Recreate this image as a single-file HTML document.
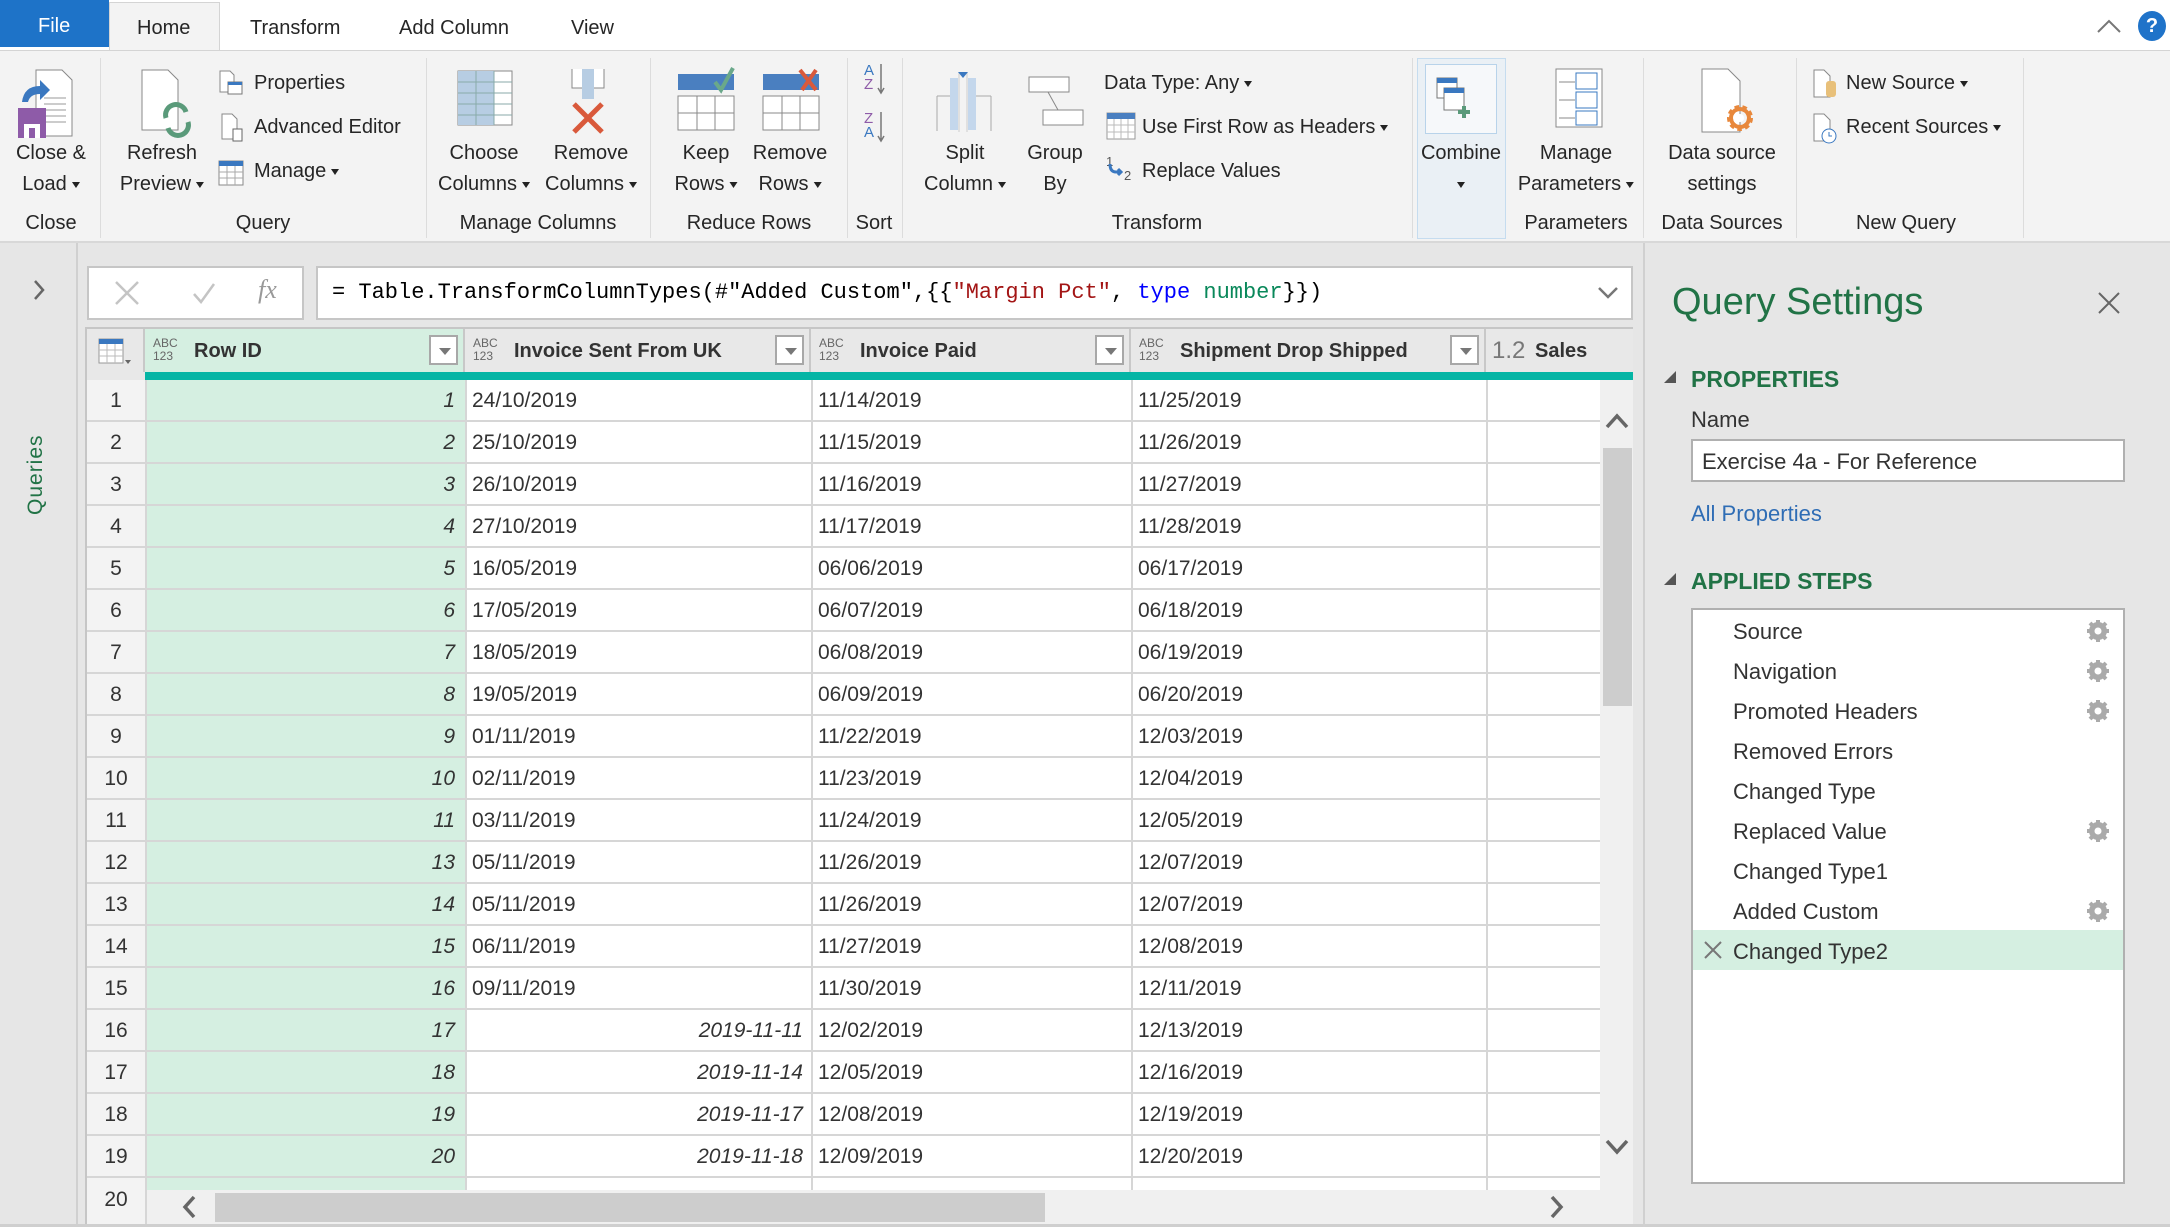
<!DOCTYPE html>
<html><head><meta charset="utf-8">
<style>
*{margin:0;padding:0;box-sizing:border-box}
body{width:2170px;height:1227px;overflow:hidden;background:#e6e6e6;font-family:"Liberation Sans",sans-serif;color:#262626;position:relative}
.a{position:absolute;white-space:nowrap}
.t{font-size:20px;color:#262626}
.c{transform:translateX(-50%);text-align:center;line-height:31px}
.sep{position:absolute;top:58px;width:1px;height:180px;background:#dcdcdc}
.tri{display:inline-block;width:0;height:0;border-left:4px solid transparent;border-right:4px solid transparent;border-top:6px solid #222;vertical-align:middle;margin-left:5px}
.row{position:absolute;left:87px;width:1513px;height:42px;border-bottom:2px solid #d6d6d6}
.cell{position:absolute;top:1px;height:40px;line-height:40px;font-size:21px;color:#333}
.hd{position:absolute;top:329px;height:43px;background:#e8e8e8;border-right:2px solid #c8c8c8}
.ty{position:absolute;top:8px;font-size:12px;line-height:13px;color:#666}
.hn{position:absolute;top:11px;font-size:20px;font-weight:bold;color:#333}
.dd{position:absolute;top:6px;width:29px;height:30px;border:2px solid #a8a8a8;background:#fff}
.dd:after{content:"";position:absolute;left:8px;top:11px;border-left:6px solid transparent;border-right:6px solid transparent;border-top:7px solid #777}
.step{position:absolute;left:1733px;font-size:22px;color:#333}
.gear{position:absolute;left:2086px;width:24px;height:24px}
</style></head><body>
<!-- tab bar -->
<div class="a" style="left:0;top:0;width:2170px;height:50px;background:#fff"></div>
<div class="a" style="left:0;top:0;width:109px;height:47px;background:#1e73c8"></div>
<div class="a" style="left:38px;top:15px;font-size:20px;color:#fff">File</div>
<div class="a" style="left:109px;top:2px;width:111px;height:49px;background:#f3f3f3;border:1px solid #d4d4d4;border-bottom:none"></div>
<div class="a t" style="left:137px;top:17px">Home</div>
<div class="a t" style="left:250px;top:17px">Transform</div>
<div class="a t" style="left:399px;top:17px">Add Column</div>
<div class="a t" style="left:571px;top:17px">View</div>
<svg class="a" style="left:2096px;top:18px" width="26" height="16"><path d="M2 14 L13 3 L24 14" fill="none" stroke="#777" stroke-width="2"/></svg>
<div class="a" style="left:2138px;top:11px;width:28px;height:30px;border-radius:50%;background:#1f73c9;color:#fff;font-size:20px;font-weight:bold;text-align:center;line-height:30px">?</div>
<!-- ribbon -->
<div class="a" style="left:0;top:50px;width:2170px;height:193px;background:#f3f3f3;border-top:1px solid #d4d4d4;border-bottom:2px solid #d8d8d8"></div>
<div class="sep" style="left:100px"></div><div class="sep" style="left:426px"></div><div class="sep" style="left:650px"></div><div class="sep" style="left:847px"></div><div class="sep" style="left:902px"></div><div class="sep" style="left:1412px"></div><div class="sep" style="left:1643px"></div><div class="sep" style="left:1796px"></div><div class="sep" style="left:2023px"></div>
<div class="a" style="left:1417px;top:58px;width:89px;height:181px;background:#eaf0f5;border:1px solid #c5dcef"></div>
<div class="a" style="left:1425px;top:64px;width:72px;height:70px;background:#f6f8fa;border:1px solid #b8d3ea"></div>
<!-- icons -->
<svg class="a" style="left:14px;top:68px" width="62" height="84"><path d="M22 2 H48 L58 12 V68 H22 Z" fill="#fff" stroke="#888"/><path d="M30 30H52M30 36H52M30 42H52M30 48H52M30 54H52" stroke="#999"/><path d="M8 34 Q10 18 26 18 L26 12 L36 22 L26 32 L26 26 Q16 26 14 34 Z" fill="#3a78c0"/><rect x="4" y="40" width="28" height="30" fill="#8e5ba8"/><rect x="10" y="56" width="16" height="14" fill="#fff"/><rect x="15" y="60" width="6" height="10" fill="#8e5ba8"/></svg>
<svg class="a" style="left:138px;top:68px" width="60" height="70"><path d="M4 2 H30 L40 12 V62 H4 Z" fill="#fff" stroke="#888"/><path d="M28 50 A10 10 0 0 1 48 44" fill="none" stroke="#5a9a7a" stroke-width="5"/><path d="M50 54 A10 10 0 0 1 30 60" fill="none" stroke="#5a9a7a" stroke-width="5"/></svg>
<svg class="a" style="left:218px;top:70px" width="26" height="26"><path d="M2 1H12L16 5V22H2Z" fill="#fff" stroke="#888"/><rect x="10" y="12" width="14" height="12" fill="#fff" stroke="#777"/><rect x="10" y="12" width="14" height="3" fill="#3a78c0"/></svg>
<svg class="a" style="left:220px;top:113px" width="26" height="30"><path d="M2 1H12L17 6V26H2Z" fill="#fff" stroke="#888"/><rect x="13" y="16" width="9" height="12" fill="#fff" stroke="#666"/></svg>
<svg class="a" style="left:218px;top:160px" width="26" height="26"><rect x="1" y="1" width="24" height="24" fill="#fff" stroke="#888"/><rect x="1" y="1" width="24" height="5" fill="#3a78c0"/><path d="M1 12H25M1 18H25M9 6V25M17 6V25" stroke="#aaa"/></svg>
<svg class="a" style="left:457px;top:70px" width="56" height="58"><rect x="1" y="1" width="54" height="54" fill="#fff" stroke="#888"/><rect x="1" y="1" width="36" height="54" fill="#b7cde3"/><path d="M1 12H55M1 23H55M1 34H55M1 45H55M19 1V55M37 1V55" stroke="#8aa"/></svg>
<svg class="a" style="left:566px;top:68px" width="50" height="66"><path d="M6 1V20H38V1" fill="#fff" stroke="#888"/><rect x="16" y="1" width="12" height="30" fill="#b7cde3"/><path d="M8 36 L36 64 M36 36 L8 64" stroke="#d9593b" stroke-width="5"/></svg>
<svg class="a" style="left:677px;top:66px" width="58" height="66"><rect x="1" y="8" width="56" height="16" fill="#4a7fc0"/><path d="M38 16 L44 24 L56 2" fill="none" stroke="#6aa88a" stroke-width="4"/><rect x="1" y="30" width="56" height="34" fill="#fff" stroke="#888"/><path d="M1 47H57M20 30V64M38 30V64" stroke="#888"/></svg>
<svg class="a" style="left:762px;top:66px" width="58" height="66"><rect x="1" y="8" width="56" height="16" fill="#4a7fc0"/><path d="M38 4 L54 24 M54 4 L40 24" stroke="#d9593b" stroke-width="4"/><rect x="1" y="30" width="56" height="34" fill="#fff" stroke="#888"/><path d="M1 47H57M20 30V64M38 30V64" stroke="#888"/></svg>
<div class="a" style="left:864px;top:64px;font-size:15px;line-height:14px;color:#3a78c0">A<br><span style="color:#8e5ba8">Z</span></div>
<div class="a" style="left:864px;top:112px;font-size:15px;line-height:14px;color:#8e5ba8">Z<br><span style="color:#3a78c0">A</span></div>
<svg class="a" style="left:877px;top:64px" width="8" height="80"><path d="M4 0V28M1 24L4 29L7 24M4 48V76M1 72L4 77L7 72" fill="none" stroke="#777" stroke-width="1.5"/></svg>
<svg class="a" style="left:936px;top:66px" width="56" height="66"><path d="M1 30H20M36 30H55M1 30V65M55 30V65" fill="none" stroke="#aaa"/><rect x="14" y="12" width="8" height="52" fill="#c4d7ec"/><rect x="32" y="12" width="8" height="52" fill="#c4d7ec"/><path d="M23 6V66M31 6V66" stroke="#ccc"/><path d="M22 6H32L27 12Z" fill="#3a78c0"/></svg>
<svg class="a" style="left:1028px;top:76px" width="56" height="50"><rect x="1" y="1" width="40" height="15" fill="#fff" stroke="#888"/><rect x="15" y="34" width="40" height="15" fill="#fff" stroke="#888"/><path d="M20 16 L30 34" stroke="#888"/></svg>
<svg class="a" style="left:1106px;top:112px" width="30" height="28"><rect x="1" y="1" width="28" height="26" fill="#fff" stroke="#999"/><rect x="1" y="1" width="28" height="6" fill="#4a7fc0"/><path d="M1 13H29M1 20H29M8 7V27M15 7V27M22 7V27" stroke="#bbb"/></svg>
<div class="a" style="left:1106px;top:154px;font-size:13px;color:#555">1</div>
<svg class="a" style="left:1108px;top:162px" width="16" height="16"><path d="M2 2 Q2 10 8 10 H13 M10 7 L13 10 L10 13" fill="none" stroke="#3a78c0" stroke-width="3"/></svg>
<div class="a" style="left:1124px;top:168px;font-size:13px;color:#555">2</div>
<svg class="a" style="left:1436px;top:76px" width="36" height="42"><rect x="1" y="2" width="20" height="20" fill="#fff" stroke="#777"/><rect x="1" y="2" width="20" height="5" fill="#3a78c0"/><rect x="8" y="12" width="20" height="22" fill="#fff" stroke="#777"/><rect x="8" y="12" width="20" height="5" fill="#3a78c0"/><path d="M22 36H34M28 30V42" stroke="#5a9a7a" stroke-width="4"/></svg>
<svg class="a" style="left:1555px;top:68px" width="48" height="60"><rect x="1" y="1" width="46" height="58" fill="#fff" stroke="#888"/><path d="M4 14H20M4 32H20M4 50H20" stroke="#888"/><rect x="21" y="5" width="21" height="16" fill="#fff" stroke="#3a78c0"/><rect x="21" y="24" width="21" height="16" fill="#fff" stroke="#3a78c0"/><rect x="21" y="43" width="21" height="14" fill="#fff" stroke="#3a78c0"/></svg>
<svg class="a" style="left:1700px;top:68px" width="56" height="66"><path d="M2 1 H28 L40 13 V64 H2 Z" fill="#fff" stroke="#888"/><circle cx="40" cy="50" r="10" fill="none" stroke="#e8883c" stroke-width="6" stroke-dasharray="4 3"/><circle cx="40" cy="50" r="9" fill="none" stroke="#e8883c" stroke-width="4"/><circle cx="40" cy="50" r="4" fill="#fff"/></svg>
<svg class="a" style="left:1812px;top:69px" width="26" height="30"><path d="M2 1H12L18 7V28H2Z" fill="#fff" stroke="#888"/><rect x="14" y="12" width="10" height="16" rx="3" fill="#e8c07a"/></svg>
<svg class="a" style="left:1812px;top:113px" width="26" height="32"><path d="M2 1H12L18 7V28H2Z" fill="#fff" stroke="#888"/><circle cx="17" cy="23" r="7" fill="#fff" stroke="#3a78c0"/><path d="M17 19V23H20" stroke="#3a78c0" fill="none"/></svg>
<!-- ribbon text -->
<div class="a t c" style="left:51px;top:138px">Close &amp;<br>Load<span class="tri"></span></div>
<div class="a t c" style="left:162px;top:138px">Refresh<br>Preview<span class="tri"></span></div>
<div class="a t" style="left:254px;top:72px">Properties</div>
<div class="a t" style="left:254px;top:116px">Advanced Editor</div>
<div class="a t" style="left:254px;top:160px">Manage<span class="tri"></span></div>
<div class="a t c" style="left:484px;top:138px">Choose<br>Columns<span class="tri"></span></div>
<div class="a t c" style="left:591px;top:138px">Remove<br>Columns<span class="tri"></span></div>
<div class="a t c" style="left:706px;top:138px">Keep<br>Rows<span class="tri"></span></div>
<div class="a t c" style="left:790px;top:138px">Remove<br>Rows<span class="tri"></span></div>
<div class="a t c" style="left:965px;top:138px">Split<br>Column<span class="tri"></span></div>
<div class="a t c" style="left:1055px;top:138px">Group<br>By</div>
<div class="a t" style="left:1104px;top:72px">Data Type: Any<span class="tri"></span></div>
<div class="a t" style="left:1142px;top:116px">Use First Row as Headers<span class="tri"></span></div>
<div class="a t" style="left:1142px;top:160px">Replace Values</div>
<div class="a t c" style="left:1461px;top:138px">Combine<br><span class="tri" style="margin:0"></span></div>
<div class="a t c" style="left:1576px;top:138px">Manage<br>Parameters<span class="tri"></span></div>
<div class="a t c" style="left:1722px;top:138px">Data source<br>settings</div>
<div class="a t" style="left:1846px;top:72px">New Source<span class="tri"></span></div>
<div class="a t" style="left:1846px;top:116px">Recent Sources<span class="tri"></span></div>
<div class="a t c" style="left:51px;top:208px">Close</div>
<div class="a t c" style="left:263px;top:208px">Query</div>
<div class="a t c" style="left:538px;top:208px">Manage Columns</div>
<div class="a t c" style="left:749px;top:208px">Reduce Rows</div>
<div class="a t c" style="left:874px;top:208px">Sort</div>
<div class="a t c" style="left:1157px;top:208px">Transform</div>
<div class="a t c" style="left:1576px;top:208px">Parameters</div>
<div class="a t c" style="left:1722px;top:208px">Data Sources</div>
<div class="a t c" style="left:1906px;top:208px">New Query</div>
<!-- left nav -->
<div class="a" style="left:76px;top:243px;width:2px;height:984px;background:#d0d0d0"></div>
<svg class="a" style="left:32px;top:279px" width="14" height="22"><path d="M3 2 L11 11 L3 20" fill="none" stroke="#666" stroke-width="2.5"/></svg>
<div class="a" style="left:24px;top:515px;transform:rotate(-90deg);transform-origin:0 0;font-size:21px;color:#217346;letter-spacing:1px">Queries</div>
<!-- formula bar -->
<div class="a" style="left:87px;top:266px;width:217px;height:54px;background:#fff;border:2px solid #c6c6c6"></div>
<svg class="a" style="left:114px;top:280px" width="26" height="26"><path d="M2 2L24 24M24 2L2 24" stroke="#c4c4c4" stroke-width="2.5"/></svg>
<svg class="a" style="left:192px;top:282px" width="24" height="22"><path d="M2 12L9 20L22 2" fill="none" stroke="#c4c4c4" stroke-width="2.5"/></svg>
<div class="a" style="left:258px;top:275px;font-family:'Liberation Serif',serif;font-style:italic;font-size:26px;color:#999">fx</div>
<div class="a" style="left:316px;top:266px;width:1317px;height:54px;background:#fff;border:2px solid #c6c6c6"></div>
<div class="a" style="left:332px;top:280px;font-family:'Liberation Mono',monospace;font-size:22px;color:#000">= Table.TransformColumnTypes(#"Added Custom",{{<span style="color:#a31515">"Margin Pct"</span>, <span style="color:#0000ff">type</span> <span style="color:#09885a">number</span>}})</div>
<svg class="a" style="left:1597px;top:286px" width="22" height="14"><path d="M2 2L11 11L20 2" fill="none" stroke="#777" stroke-width="2.5"/></svg>
<!-- table -->
<div class="a" style="left:87px;top:327px;width:1546px;height:2px;background:#c6c6c6"></div>
<div class="a" style="left:87px;top:380px;width:1513px;height:810px;background:#fff"></div>
<div class="a" style="left:87px;top:380px;width:58px;height:844px;background:#f3f3f3"></div>
<div class="a" style="left:145px;top:380px;width:320px;height:810px;background:#d5efe1"></div>
<div class="hd" style="left:87px;width:58px"></div>
<svg class="a" style="left:98px;top:338px" width="36" height="28"><rect x="1" y="1" width="24" height="24" fill="#fff" stroke="#999"/><rect x="1" y="1" width="24" height="5" fill="#3a78c0"/><path d="M1 12H25M1 18H25M9 6V25M17 6V25" stroke="#bbb"/><path d="M27 22H33L30 26Z" fill="#666"/></svg>
<div class="hd" style="left:145px;width:320px;background:#d5efe1"><div class="ty" style="left:8px">ABC<br>123</div><div class="hn" style="left:49px">Row ID</div><div class="dd" style="left:284px"></div></div>
<div class="hd" style="left:465px;width:346px"><div class="ty" style="left:8px">ABC<br>123</div><div class="hn" style="left:49px">Invoice Sent From UK</div><div class="dd" style="left:310px"></div></div>
<div class="hd" style="left:811px;width:320px"><div class="ty" style="left:8px">ABC<br>123</div><div class="hn" style="left:49px">Invoice Paid</div><div class="dd" style="left:284px"></div></div>
<div class="hd" style="left:1131px;width:355px"><div class="ty" style="left:8px">ABC<br>123</div><div class="hn" style="left:49px">Shipment Drop Shipped</div><div class="dd" style="left:319px"></div></div>
<div class="hd" style="left:1486px;width:147px;border-right:none"><div class="a" style="left:6px;top:8px;font-size:24px;color:#777">1.2</div><div class="hn" style="left:49px">Sales</div></div>
<div class="a" style="left:87px;top:372px;width:1546px;height:8px;background:#05b5a5"></div>
<div class="a" style="left:87px;top:372px;width:58px;height:8px;background:#e8e8e8"></div>
<!-- rows -->
<div class="row" style="top:380px"><div class="cell" style="left:0;width:58px;text-align:center">1</div><div class="cell" style="left:58px;width:310px;text-align:right;font-style:italic">1</div><div class="cell" style="left:385px">24/10/2019</div><div class="cell" style="left:731px">11/14/2019</div><div class="cell" style="left:1051px">11/25/2019</div></div>
<div class="row" style="top:422px"><div class="cell" style="left:0;width:58px;text-align:center">2</div><div class="cell" style="left:58px;width:310px;text-align:right;font-style:italic">2</div><div class="cell" style="left:385px">25/10/2019</div><div class="cell" style="left:731px">11/15/2019</div><div class="cell" style="left:1051px">11/26/2019</div></div>
<div class="row" style="top:464px"><div class="cell" style="left:0;width:58px;text-align:center">3</div><div class="cell" style="left:58px;width:310px;text-align:right;font-style:italic">3</div><div class="cell" style="left:385px">26/10/2019</div><div class="cell" style="left:731px">11/16/2019</div><div class="cell" style="left:1051px">11/27/2019</div></div>
<div class="row" style="top:506px"><div class="cell" style="left:0;width:58px;text-align:center">4</div><div class="cell" style="left:58px;width:310px;text-align:right;font-style:italic">4</div><div class="cell" style="left:385px">27/10/2019</div><div class="cell" style="left:731px">11/17/2019</div><div class="cell" style="left:1051px">11/28/2019</div></div>
<div class="row" style="top:548px"><div class="cell" style="left:0;width:58px;text-align:center">5</div><div class="cell" style="left:58px;width:310px;text-align:right;font-style:italic">5</div><div class="cell" style="left:385px">16/05/2019</div><div class="cell" style="left:731px">06/06/2019</div><div class="cell" style="left:1051px">06/17/2019</div></div>
<div class="row" style="top:590px"><div class="cell" style="left:0;width:58px;text-align:center">6</div><div class="cell" style="left:58px;width:310px;text-align:right;font-style:italic">6</div><div class="cell" style="left:385px">17/05/2019</div><div class="cell" style="left:731px">06/07/2019</div><div class="cell" style="left:1051px">06/18/2019</div></div>
<div class="row" style="top:632px"><div class="cell" style="left:0;width:58px;text-align:center">7</div><div class="cell" style="left:58px;width:310px;text-align:right;font-style:italic">7</div><div class="cell" style="left:385px">18/05/2019</div><div class="cell" style="left:731px">06/08/2019</div><div class="cell" style="left:1051px">06/19/2019</div></div>
<div class="row" style="top:674px"><div class="cell" style="left:0;width:58px;text-align:center">8</div><div class="cell" style="left:58px;width:310px;text-align:right;font-style:italic">8</div><div class="cell" style="left:385px">19/05/2019</div><div class="cell" style="left:731px">06/09/2019</div><div class="cell" style="left:1051px">06/20/2019</div></div>
<div class="row" style="top:716px"><div class="cell" style="left:0;width:58px;text-align:center">9</div><div class="cell" style="left:58px;width:310px;text-align:right;font-style:italic">9</div><div class="cell" style="left:385px">01/11/2019</div><div class="cell" style="left:731px">11/22/2019</div><div class="cell" style="left:1051px">12/03/2019</div></div>
<div class="row" style="top:758px"><div class="cell" style="left:0;width:58px;text-align:center">10</div><div class="cell" style="left:58px;width:310px;text-align:right;font-style:italic">10</div><div class="cell" style="left:385px">02/11/2019</div><div class="cell" style="left:731px">11/23/2019</div><div class="cell" style="left:1051px">12/04/2019</div></div>
<div class="row" style="top:800px"><div class="cell" style="left:0;width:58px;text-align:center">11</div><div class="cell" style="left:58px;width:310px;text-align:right;font-style:italic">11</div><div class="cell" style="left:385px">03/11/2019</div><div class="cell" style="left:731px">11/24/2019</div><div class="cell" style="left:1051px">12/05/2019</div></div>
<div class="row" style="top:842px"><div class="cell" style="left:0;width:58px;text-align:center">12</div><div class="cell" style="left:58px;width:310px;text-align:right;font-style:italic">13</div><div class="cell" style="left:385px">05/11/2019</div><div class="cell" style="left:731px">11/26/2019</div><div class="cell" style="left:1051px">12/07/2019</div></div>
<div class="row" style="top:884px"><div class="cell" style="left:0;width:58px;text-align:center">13</div><div class="cell" style="left:58px;width:310px;text-align:right;font-style:italic">14</div><div class="cell" style="left:385px">05/11/2019</div><div class="cell" style="left:731px">11/26/2019</div><div class="cell" style="left:1051px">12/07/2019</div></div>
<div class="row" style="top:926px"><div class="cell" style="left:0;width:58px;text-align:center">14</div><div class="cell" style="left:58px;width:310px;text-align:right;font-style:italic">15</div><div class="cell" style="left:385px">06/11/2019</div><div class="cell" style="left:731px">11/27/2019</div><div class="cell" style="left:1051px">12/08/2019</div></div>
<div class="row" style="top:968px"><div class="cell" style="left:0;width:58px;text-align:center">15</div><div class="cell" style="left:58px;width:310px;text-align:right;font-style:italic">16</div><div class="cell" style="left:385px">09/11/2019</div><div class="cell" style="left:731px">11/30/2019</div><div class="cell" style="left:1051px">12/11/2019</div></div>
<div class="row" style="top:1010px"><div class="cell" style="left:0;width:58px;text-align:center">16</div><div class="cell" style="left:58px;width:310px;text-align:right;font-style:italic">17</div><div class="cell" style="left:378px;width:338px;text-align:right;font-style:italic">2019-11-11</div><div class="cell" style="left:731px">12/02/2019</div><div class="cell" style="left:1051px">12/13/2019</div></div>
<div class="row" style="top:1052px"><div class="cell" style="left:0;width:58px;text-align:center">17</div><div class="cell" style="left:58px;width:310px;text-align:right;font-style:italic">18</div><div class="cell" style="left:378px;width:338px;text-align:right;font-style:italic">2019-11-14</div><div class="cell" style="left:731px">12/05/2019</div><div class="cell" style="left:1051px">12/16/2019</div></div>
<div class="row" style="top:1094px"><div class="cell" style="left:0;width:58px;text-align:center">18</div><div class="cell" style="left:58px;width:310px;text-align:right;font-style:italic">19</div><div class="cell" style="left:378px;width:338px;text-align:right;font-style:italic">2019-11-17</div><div class="cell" style="left:731px">12/08/2019</div><div class="cell" style="left:1051px">12/19/2019</div></div>
<div class="row" style="top:1136px"><div class="cell" style="left:0;width:58px;text-align:center">19</div><div class="cell" style="left:58px;width:310px;text-align:right;font-style:italic">20</div><div class="cell" style="left:378px;width:338px;text-align:right;font-style:italic">2019-11-18</div><div class="cell" style="left:731px">12/09/2019</div><div class="cell" style="left:1051px">12/20/2019</div></div>
<div class="a" style="left:87px;top:1180px;width:58px;height:42px;line-height:40px;font-size:21px;color:#333;text-align:center">20</div>
<!-- vertical lines -->
<div class="a" style="left:145px;top:380px;width:2px;height:844px;background:#d6d6d6"></div>
<div class="a" style="left:465px;top:380px;width:2px;height:810px;background:#d6d6d6"></div>
<div class="a" style="left:811px;top:380px;width:2px;height:810px;background:#d6d6d6"></div>
<div class="a" style="left:1131px;top:380px;width:2px;height:810px;background:#d6d6d6"></div>
<div class="a" style="left:1486px;top:380px;width:2px;height:810px;background:#d6d6d6"></div>
<div class="a" style="left:85px;top:327px;width:2px;height:897px;background:#c6c6c6"></div>
<!-- v scrollbar -->
<div class="a" style="left:1600px;top:380px;width:33px;height:810px;background:#f0f0f0"></div>
<svg class="a" style="left:1605px;top:412px" width="24" height="18"><path d="M2 15L12 4L22 15" fill="none" stroke="#666" stroke-width="3.5"/></svg>
<div class="a" style="left:1603px;top:448px;width:29px;height:258px;background:#cdcdcd"></div>
<svg class="a" style="left:1605px;top:1138px" width="24" height="18"><path d="M2 3L12 14L22 3" fill="none" stroke="#666" stroke-width="3.5"/></svg>
<!-- h scrollbar -->
<div class="a" style="left:147px;top:1190px;width:1486px;height:34px;background:#f0f0f0"></div>
<div class="a" style="left:215px;top:1193px;width:830px;height:29px;background:#cdcdcd"></div>
<svg class="a" style="left:181px;top:1195px" width="16" height="24"><path d="M13 2L4 12L13 22" fill="none" stroke="#666" stroke-width="3.5"/></svg>
<svg class="a" style="left:1549px;top:1195px" width="16" height="24"><path d="M3 2L12 12L3 22" fill="none" stroke="#666" stroke-width="3.5"/></svg>
<div class="a" style="left:0;top:1224px;width:2170px;height:3px;background:#cfcfcf"></div>
<!-- right panel -->
<div class="a" style="left:1643px;top:243px;width:2px;height:984px;background:#d0d0d0"></div>
<div class="a" style="left:1672px;top:281px;font-size:38px;color:#217346">Query Settings</div>
<svg class="a" style="left:2097px;top:291px" width="24" height="24"><path d="M2 2L22 22M22 2L2 22" stroke="#666" stroke-width="2"/></svg>
<svg class="a" style="left:1663px;top:370px" width="14" height="14"><path d="M13 1V13H1Z" fill="#555"/></svg>
<div class="a" style="left:1691px;top:366px;font-size:23px;font-weight:bold;color:#217346">PROPERTIES</div>
<div class="a" style="left:1691px;top:407px;font-size:22px;color:#333">Name</div>
<div class="a" style="left:1691px;top:439px;width:434px;height:43px;background:#fff;border:2px solid #b0b0b0"></div>
<div class="a" style="left:1702px;top:449px;font-size:22px;color:#333">Exercise 4a - For Reference</div>
<div class="a" style="left:1691px;top:501px;font-size:22px;color:#2f6db5">All Properties</div>
<svg class="a" style="left:1663px;top:572px" width="14" height="14"><path d="M13 1V13H1Z" fill="#555"/></svg>
<div class="a" style="left:1691px;top:568px;font-size:23px;font-weight:bold;color:#217346">APPLIED STEPS</div>
<div class="a" style="left:1691px;top:608px;width:434px;height:576px;background:#fff;border:2px solid #b0b0b0"></div>
<div class="a" style="left:1693px;top:930px;width:430px;height:40px;background:#d5efe1"></div>
<svg class="a" style="left:1703px;top:940px" width="20" height="20"><path d="M2 2L18 18M18 2L2 18" stroke="#777" stroke-width="2"/></svg>
<div class="step" style="top:619px">Source</div>
<div class="step" style="top:659px">Navigation</div>
<div class="step" style="top:699px">Promoted Headers</div>
<div class="step" style="top:739px">Removed Errors</div>
<div class="step" style="top:779px">Changed Type</div>
<div class="step" style="top:819px">Replaced Value</div>
<div class="step" style="top:859px">Changed Type1</div>
<div class="step" style="top:899px">Added Custom</div>
<div class="step" style="top:939px">Changed Type2</div>
<svg width="0" height="0" style="position:absolute"><defs><g id="gr"><circle cx="12" cy="12" r="7" fill="none" stroke="#aaa" stroke-width="4"/><path d="M12 1V23M1 12H23M4 4L20 20M20 4L4 20" stroke="#aaa" stroke-width="4"/><circle cx="12" cy="12" r="3.5" fill="#fff"/></g></defs></svg>
<svg class="gear" style="top:619px"><use href="#gr"/></svg>
<svg class="gear" style="top:659px"><use href="#gr"/></svg>
<svg class="gear" style="top:699px"><use href="#gr"/></svg>
<svg class="gear" style="top:819px"><use href="#gr"/></svg>
<svg class="gear" style="top:899px"><use href="#gr"/></svg>
</body></html>
